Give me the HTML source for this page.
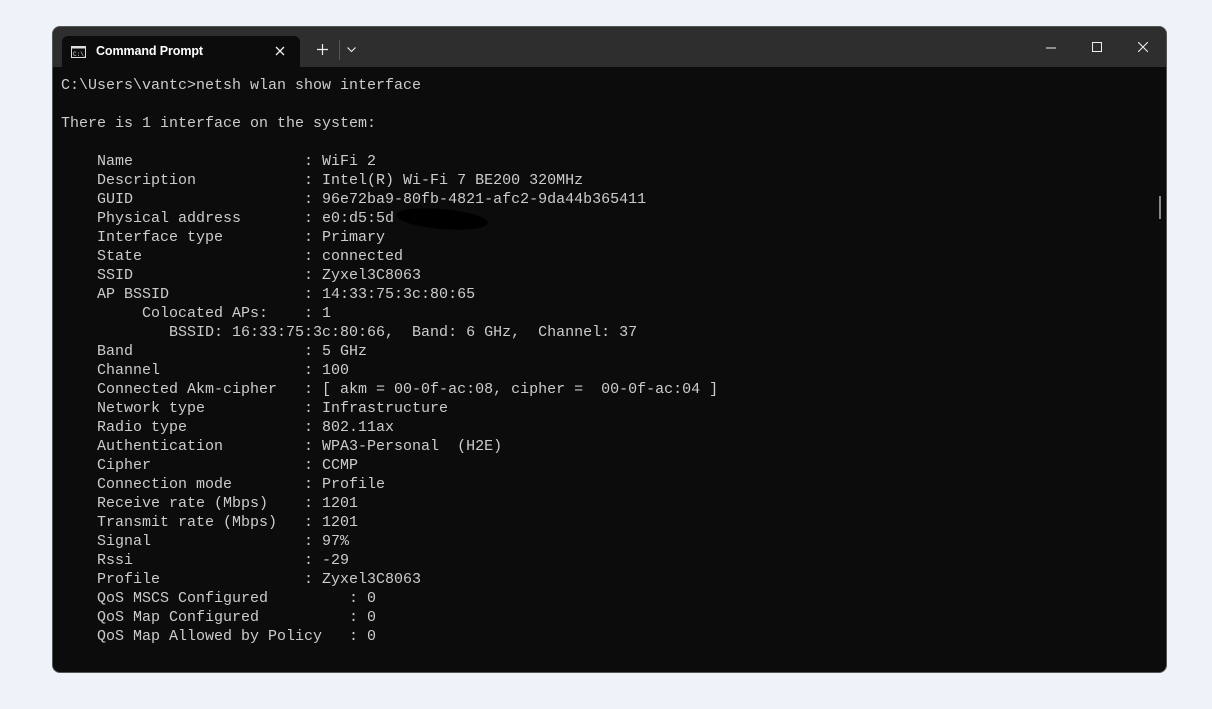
<!DOCTYPE html>
<html><head><meta charset="utf-8"><style>
body{margin:0;width:1212px;height:709px;background:#eef2f9;position:relative;overflow:hidden;font-family:"Liberation Sans",sans-serif}
.win{position:absolute;left:53px;top:27px;width:1113px;height:645px;background:#0c0c0c;border-radius:7px;overflow:hidden;box-shadow:0 0 0 1px #555}
.bar{position:absolute;left:0;top:0;width:100%;height:40px;background:#2e2e2e}
.tab{position:absolute;left:9px;top:9px;width:238px;height:31px;background:#0c0c0c;border-radius:6px 6px 0 0}
.tab .t{position:absolute;left:34px;top:8px;color:#fff;font-size:12.5px;font-weight:bold;letter-spacing:-0.1px}
pre{position:absolute;left:61px;top:76px;margin:0;font-family:"Liberation Mono",monospace;font-size:15px;line-height:19px;color:#cccccc}
</style></head><body>
<div class="win">
<div class="bar">
<div class="tab">
<svg style="position:absolute;left:9px;top:10px" width="15" height="12" viewBox="0 0 15 12"><rect x="0.5" y="0.5" width="14" height="11" fill="none" stroke="#ddd"/><rect x="0.5" y="0.5" width="14" height="2" fill="#ddd"/><text x="2" y="10" font-size="6" fill="#ddd" font-family="Liberation Mono">C:\_</text></svg>
<span class="t">Command Prompt</span>
<svg style="position:absolute;left:213px;top:10px" width="10" height="10"><path d="M1 1L9 9M9 1L1 9" stroke="#eee" stroke-width="1.3"/></svg>
</div>
<svg style="position:absolute;left:264px;top:17px" width="11" height="11"><path d="M5.5 0V11M0 5.5H11" stroke="#eee" stroke-width="1.2"/></svg>
<div style="position:absolute;left:286px;top:13px;width:1px;height:20px;background:#555"></div>
<svg style="position:absolute;left:294px;top:20px" width="9" height="6"><path d="M0.5 0.5L4.5 4.5L8.5 0.5" stroke="#eee" fill="none" stroke-width="1.1"/></svg>
<svg style="position:absolute;left:993px;top:20px" width="10" height="2"><path d="M0 1H10" stroke="#eee"/></svg>
<svg style="position:absolute;left:1039px;top:15px" width="10" height="10"><rect x="0.5" y="0.5" width="9" height="9" fill="none" stroke="#eee"/></svg>
<svg style="position:absolute;left:1085px;top:15px" width="10" height="10"><path d="M0 0L10 10M10 0L0 10" stroke="#eee" stroke-width="1.1"/></svg>
</div>
<div style="position:absolute;left:1106px;top:169px;width:2px;height:23px;background:#888"></div>
</div>
<pre>C:\Users\vantc&gt;netsh wlan show interface

There is 1 interface on the system:

    Name                   : WiFi 2
    Description            : Intel(R) Wi-Fi 7 BE200 320MHz
    GUID                   : 96e72ba9-80fb-4821-afc2-9da44b365411
    Physical address       : e0:d5:5d
    Interface type         : Primary
    State                  : connected
    SSID                   : Zyxel3C8063
    AP BSSID               : 14:33:75:3c:80:65
         Colocated APs:    : 1
            BSSID: 16:33:75:3c:80:66,  Band: 6 GHz,  Channel: 37
    Band                   : 5 GHz
    Channel                : 100
    Connected Akm-cipher   : [ akm = 00-0f-ac:08, cipher =  00-0f-ac:04 ]
    Network type           : Infrastructure
    Radio type             : 802.11ax
    Authentication         : WPA3-Personal  (H2E)
    Cipher                 : CCMP
    Connection mode        : Profile
    Receive rate (Mbps)    : 1201
    Transmit rate (Mbps)   : 1201
    Signal                 : 97%
    Rssi                   : -29
    Profile                : Zyxel3C8063
    QoS MSCS Configured         : 0
    QoS Map Configured          : 0
    QoS Map Allowed by Policy   : 0</pre>
<div style="position:absolute;left:396px;top:209px;width:92px;height:20px;background:#000;border-radius:50%;transform:rotate(5deg)"></div>
</body></html>
